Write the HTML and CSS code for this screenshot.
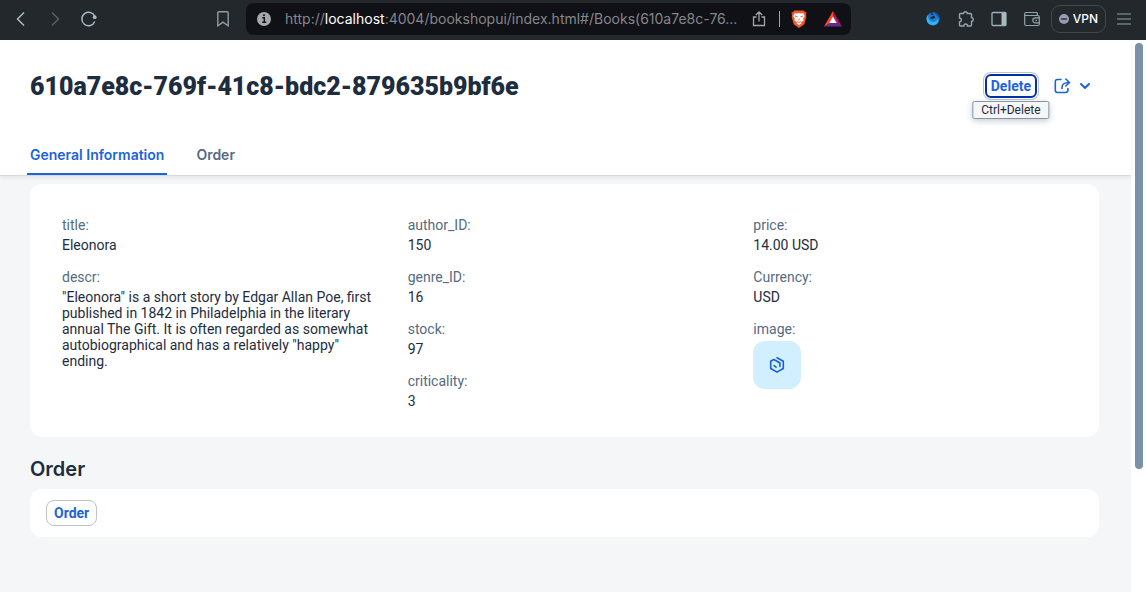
FILE: index.html
```html
<!DOCTYPE html>
<html lang="en">
<head>
<meta charset="utf-8">
<meta name="viewport" content="width=device-width, initial-scale=1">
<title>Books</title>
<link rel="stylesheet" href="styles.css">
</head>
<body>
<header class="toolbar">
  <div class="toolbar-nav">
    <button class="tool" aria-label="Back"><svg width="16" height="16" viewBox="0 0 16 16"><path d="M11 1.500L4.500 8l6.500 6.500" stroke="#a9bec5" stroke-width="1.500"/></svg></button>
    <button class="tool" aria-label="Forward"><svg width="16" height="16" viewBox="0 0 16 16"><path d="M5 1.500L11.500 8 5 14.500" stroke="#566065" stroke-width="1.500"/></svg></button>
    <button class="tool" aria-label="Reload"><svg width="16" height="16" viewBox="0 0 16 16"><path d="M13.800 10.500A6.700 6.700 0 1 1 14 6" stroke="#a9bec5" stroke-width="1.400"/><circle cx="13.700" cy="6.200" r="1.900" fill="#a9bec5"/></svg></button>
    <button class="tool bookmark" aria-label="Bookmark"><svg width="16" height="16" viewBox="0 0 16 16"><path d="M2.800 1.800Q2.800.8 3.800.8h8.400q1 0 1 1v13L8 11.200l-5.200 3.600z" stroke="#8d9da3" stroke-width="1.400"/></svg></button>
  </div>
  <div class="address">
    <svg width="16" height="16" viewBox="0 0 16 16"><circle cx="8" cy="8" r="7" fill="#a5a7ac"/><path d="M6.300 6.800H8.300V11M6.200 11.200h4" stroke="#101116" stroke-width="1.400"/><circle cx="8" cy="4.300" r="1" fill="#101116"/></svg>
    <div class="url">http://<span class="host">localhost</span>:4004/bookshopui/index.html#/Books(610a7e8c-76...</div>
    <button class="tool" aria-label="Share"><svg width="16" height="16" viewBox="0 0 16 16"><path d="M5.500 6H2.500v8.500h11V6h-3M8 10.500V1.200M4.800 4L8 1l3.200 3" stroke="#a4a5a8" stroke-width="1.300"/></svg></button>
    <span class="divider"></span>
    <button class="tool" aria-label="Brave Shields"><svg width="18" height="20" viewBox="0 0 18 20"><path d="M4.500 1.500h9l1.800 1.800 1.200 0-.5 3.200.3 1.500-2 7.200L9 19l-5.300-3.800L1.700 8 2 6.500 1.500 3.300h1.200z" fill="#fb542b"/><path d="M5 4l2.300.5L9 4l1.700.5L13 4l1.700 3-1.500 2.500.3 2-2.500 1.700.5 1L9 16l-2.500-1.800.5-1-2.500-1.700.3-2L3.300 7z" fill="#fff"/><path d="M5 7l2.500.8M13 7l-2.500.8M7 12.500l2 1 2-1M9 9.500v2" stroke="#fb542b" stroke-width=".9"/></svg></button>
    <button class="tool" aria-label="Brave Rewards"><svg width="18" height="16" viewBox="0 0 18 16"><path d="M9 0L0 15.500 9 11z" fill="#ff4724"/><path d="M9 0l9 15.500L9 11z" fill="#9e1f63"/><path d="M0 15.500h18L9 10z" fill="#662d91"/><path d="M9 5.500L5.300 12h7.400z" fill="#fff"/></svg></button>
  </div>
  <div class="toolbar-ext">
    <button class="tool" aria-label="Extension"><svg width="16" height="16" viewBox="0 0 16 16"><path d="M1.500 8Q1.300 3 7 1.500L5.500 4.200 9 3.800 7 1.500 9 1.300Q14.700 3 14.500 8 13.500 14.500 8 14.500 2 14 1.500 8z" fill="#1b7fda"/><path d="M1.500 8Q1.600 5.500 3 4Q3 9.500 7 11Q11.500 11.500 13 7.500 14 13 8.500 14.200 2 14 1.500 8z" fill="#35b3f3"/><path d="M9 1.300Q14.700 3 14.500 8L11.500 4.500z" fill="#1554a5"/><path d="M5.300 6.300L9.300 4.500 10 7 8 7.700 5.800 7.900z" fill="#22282c"/></svg></button>
    <button class="tool" aria-label="Extensions"><svg width="16" height="16" viewBox="1 1 16 16"><path d="M2.500 4.500Q2.500 3.500 3.500 3.500H6.500Q6.500 1.700 8.400 1.700T10.300 3.500H13.500Q14.500 3.500 14.500 4.500V7.500Q16.300 7.700 16.300 9.500T14.500 11.500V15Q14.500 16 13.500 16H10.500Q10.500 14 8.700 14T6.900 16H3.500Q2.500 16 2.500 15V12Q4.400 11.800 4.400 10T2.500 8z" stroke="#96a7ad" stroke-width="1.400"/></svg></button>
    <button class="tool" aria-label="Sidebar"><svg width="16" height="16" viewBox="0 0 16 16"><rect x="1" y="1.500" width="14" height="13" rx="1" stroke="#9db0b6" stroke-width="1.300"/><path d="M10.500 1.500H15v13h-4.500z" fill="#a6b9c0"/></svg></button>
    <button class="tool" aria-label="Wallet"><svg width="16" height="16" viewBox="0 0 16 16"><path d="M13.300 4.500V2.500Q13.300 1.500 12.300 1.500H2Q.7 1.500.7 3V13Q.7 14.500 2.200 14.500H13.800Q15.300 14.500 15.300 13V6Q15.300 4.500 13.800 4.500H2.200Q.7 4.500.7 3M15.300 6.800H11.300a2.500 2.500 0 0 0 0 5h4M11.500 9.300h1.500" stroke="#94a5ab" stroke-width="1.200"/></svg></button>
    <button class="vpn"><svg width="10" height="10" viewBox="0 0 10 10"><circle cx="5" cy="5" r="5" fill="#9b98b3"/><path d="M2 5h6" stroke="#292c36" stroke-width="1.400"/></svg>VPN</button>
    <button class="tool menu" aria-label="Menu"><svg width="14" height="12" viewBox="0 0 14 12"><path d="M0 1h14M0 6h14M0 11h14" stroke="#91a19f" stroke-width="1.200"/></svg></button>
  </div>
</header>
<div class="viewport">
  <main class="page">
    <div class="page-head">
      <div class="title-row">
        <h1>610a7e8c-769f-41c8-bdc2-879635b9bf6e</h1>
        <div class="actions">
          <div class="delete-wrap">
            <button class="delete">Delete</button>
            <div class="tip" role="tooltip">Ctrl+Delete</div>
          </div>
          <button class="share" aria-label="Share"><svg width="40" height="16" viewBox="0 0 40 16"><path d="M8 1.500H4.500Q2.300 1.500 2.300 3.700V12.300Q2.300 14.500 4.500 14.500H12.700Q14.900 14.500 14.900 12.300V10.500M9 10.500Q8.500 4.500 16 4.500M12.800 1L16.500 4.500 12.800 8" stroke="#1b64d9" stroke-width="1.600" stroke-linecap="round" stroke-linejoin="round"/><path d="M28 6L32 10 36 6" stroke="#1b64d9" stroke-width="2" stroke-linecap="round" stroke-linejoin="round"/></svg></button>
        </div>
      </div>
      <nav class="tabs">
        <a class="tab active" href="#general">General Information</a>
        <a class="tab" href="#order">Order</a>
      </nav>
    </div>
    <div class="content">
      <section class="card form" id="general">
        <dl class="column">
          <div><dt>title:</dt><dd>Eleonora</dd></div>
          <div><dt>descr:</dt><dd>"Eleonora" is a short story by Edgar Allan Poe, first published in 1842 in Philadelphia in the literary annual The Gift. It is often regarded as somewhat autobiographical and has a relatively "happy" ending.</dd></div>
        </dl>
        <dl class="column">
          <div><dt>author_ID:</dt><dd>150</dd></div>
          <div><dt>genre_ID:</dt><dd>16</dd></div>
          <div><dt>stock:</dt><dd>97</dd></div>
          <div><dt>criticality:</dt><dd>3</dd></div>
        </dl>
        <dl class="column">
          <div><dt>price:</dt><dd>14.00 USD</dd></div>
          <div><dt>Currency:</dt><dd>USD</dd></div>
          <div><dt>image:</dt><dd class="avatar"><svg width="16" height="16" viewBox="0 0 16 16"><path d="M4.800 2.500L1.700 4.300V11.500L8 15.100 14.300 11.500V4.300L8 .8M4.800 2.500L8 4.200 10.900 6V9.500M5 8.500L7 10.200" stroke="#1b5fd9" stroke-width="1.600" stroke-linecap="round" stroke-linejoin="round"/></svg></dd></div>
        </dl>
      </section>
      <section id="order">
        <h2>Order</h2>
        <div class="card order-card"><button class="order">Order</button></div>
      </section>
    </div>
  </main>
  <div class="scrollbar"><div class="thumb"></div></div>
</div>
</body>
</html>
```
FILE: styles.css
```css
* { box-sizing: border-box; }
body {
  margin: 0;
  height: 100vh;
  display: flex;
  flex-direction: column;
  overflow: hidden;
  font: 14px/16px Roboto, sans-serif;
  color: #1d2d3e;
  background: #fff;
}
button { font: inherit; margin: 0; cursor: pointer; }
svg { display: block; fill: none; flex: none; }

.toolbar {
  display: flex;
  align-items: center;
  flex: none;
  height: 40px;
  padding-bottom: 2px;
  background: #22282c;
}
.tool { display: flex; padding: 0; border: 0; background: none; }
.toolbar-nav { display: flex; gap: 18px; width: 246px; padding: 0 15px 0 13px; }
.bookmark { margin-left: auto; }
.address {
  display: flex;
  align-items: center;
  flex: 1;
  min-width: 0;
  height: 32px;
  padding: 0 9px 0 10px;
  border-radius: 8px;
  background: #101116;
}
.url {
  flex: 1;
  min-width: 0;
  margin: 0 4px 0 13px;
  overflow: hidden;
  white-space: nowrap;
  text-overflow: ellipsis;
  font: 14px/20px Inter, sans-serif;
  color: #85868a;
}
.host { color: #fff; }
.divider { width: 1px; height: 16px; margin: 0 10px 0 12px; background: #a4a5a8; }
.address .tool + .tool { margin-left: 16px; }
.toolbar-ext { display: flex; align-items: center; gap: 17px; padding: 0 15px 0 74px; }
.vpn {
  display: flex;
  align-items: center;
  gap: 4px;
  height: 28px;
  margin: 0 -6px;
  padding: 0 7px;
  border: 1px solid #40494e;
  border-radius: 9px;
  background: none;
  color: #fff;
  font: 500 12px/16px Inter, sans-serif;
}

.viewport { display: flex; flex: 1; min-height: 0; }
.page { flex: 1; min-width: 0; display: flex; flex-direction: column; background: #f5f6f7; }
.page-head {
  padding: 31px 32px 0 30px;
  background: #fff;
  border-bottom: 1px solid #d9d9d9;
  box-shadow: 0 2px 4px #22354814;
}
.title-row { display: flex; justify-content: space-between; align-items: center; }
h1 { margin: 0; font: 900 25px/32px Roboto, sans-serif; }
.actions { display: flex; align-items: center; gap: 16px; padding-right: 6px; margin-top: -2px; }
.delete-wrap { position: relative; }
.delete {
  display: block;
  height: 24px;
  padding: 0 4px;
  border: 2px solid #0032a5;
  border-radius: 6px;
  background: #fff;
  box-shadow: 0 0 0 1px #fff, 0 0 0 2px #bcc3ca;
  color: #1b64d9;
  font-weight: 700;
}
.tip {
  position: absolute;
  top: 27px;
  left: 50%;
  transform: translateX(-50%);
  padding: 0 8px;
  border: 1px solid #8396a8;
  border-radius: 2px;
  background: #f5f6f7;
  box-shadow: 0 2px 6px #22354840;
  font-size: 12px;
}
.share { padding: 0; border: 0; background: none; }
.tabs { display: flex; gap: 26px; margin: 32px 0 0 -3px; }
.tab {
  padding: 12px 3px;
  color: #556b82;
  font-family: Inter, sans-serif;
  font-weight: 600;
  text-decoration: none;
}
.active { color: #1b64d9; box-shadow: inset 0 -2px #1b64d9; }
.content { padding: 8px 32px 0 30px; }
.card { background: #fff; border-radius: 12px; }
.form {
  display: grid;
  grid-template-columns: repeat(3, 1fr);
  gap: 32px;
  padding: 33px 32px 28px;
}
.column { display: flex; flex-direction: column; gap: 16px; margin: 0; }
dt { margin-bottom: 4px; color: #556b82; }
dd { margin: 0; }
.avatar {
  display: grid;
  place-items: center;
  width: 48px;
  height: 48px;
  border-radius: 12px;
  background: #d1efff;
}
h2 { margin: 0; padding: 20px 0 8px; font: 600 20px/24px Inter, sans-serif; }
.order-card { padding: 11px 16px; }
.order {
  display: block;
  height: 26px;
  padding: 0 7px;
  border: 1px solid #bcc3ca;
  border-radius: 8px;
  background: #fff;
  color: #1b64d9;
  font-weight: 700;
}
.scrollbar { width: 15px; padding: 3px 3px 3px 4px; }
.thumb { height: 78%; border-radius: 4px; background: #7b91a8; }
```
